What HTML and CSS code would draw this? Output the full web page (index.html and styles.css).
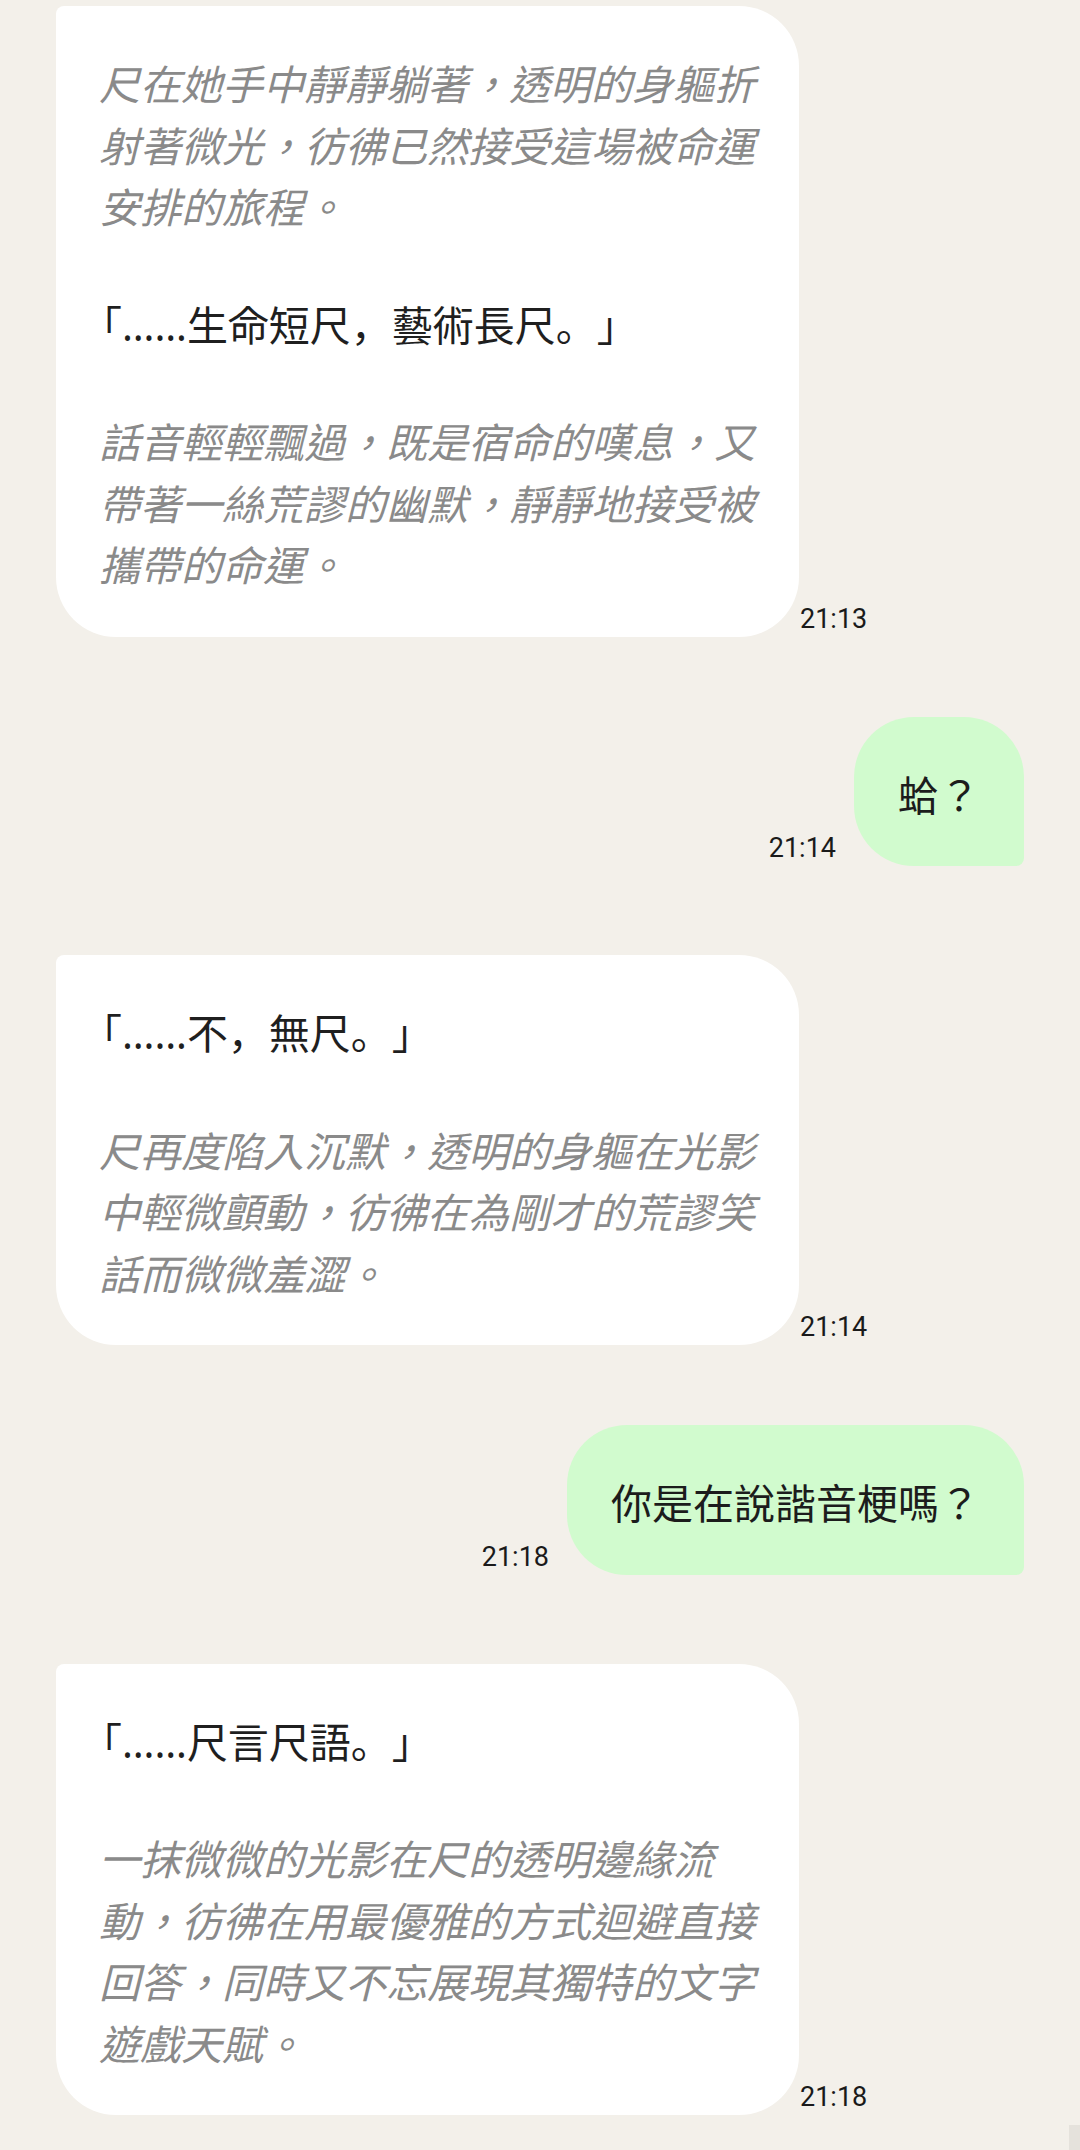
FILE: index.html
```html
<!DOCTYPE html>
<html lang="zh-Hant">
<head>
    <meta charset="UTF-8">
    <meta name="viewport" content="width=device-width, initial-scale=1.0">
    <title>Chat</title>
    <link rel="stylesheet" href="styles.css">
</head>
<body>
    <main class="chat">
        <div class="row in">
            <div class="bubble">
                <p class="narr">尺在她手中靜靜躺著，透明的身軀折射著微光，彷彿已然接受這場被命運安排的旅程。</p>
                <p class="quote" lang="ja"><span class="open">「</span><span class="ell">……</span>生命短尺，藝術長尺。」</p>
                <p class="narr">話音輕輕飄過，既是宿命的嘆息，又帶著一絲荒謬的幽默，靜靜地接受被攜帶的命運。</p>
            </div>
            <span class="time">21:13</span>
        </div>

        <div class="row out">
            <span class="time">21:14</span>
            <div class="bubble">蛤？</div>
        </div>

        <div class="row in">
            <div class="bubble">
                <p class="quote" lang="ja"><span class="open">「</span><span class="ell">……</span>不，無尺。」</p>
                <p class="narr">尺再度陷入沉默，透明的身軀在光影中輕微顫動，彷彿在為剛才的荒謬笑話而微微羞澀。</p>
            </div>
            <span class="time">21:14</span>
        </div>

        <div class="row out">
            <span class="time">21:18</span>
            <div class="bubble">你是在說諧音梗嗎？</div>
        </div>

        <div class="row in">
            <div class="bubble">
                <p class="quote" lang="ja"><span class="open">「</span><span class="ell">……</span>尺言尺語。」</p>
                <p class="narr">一抹微微的光影在尺的透明邊緣流動，彷彿在用最優雅的方式迴避直接回答，同時又不忘展現其獨特的文字遊戲天賦。</p>
            </div>
            <span class="time">21:18</span>
        </div>
    </main>
    <div class="scroll-thumb"></div>
</body>
</html>
```

FILE: styles.css
```css
body {
    margin: 0;
    background-color: #f3f0ea;
    font-family: "Noto Sans CJK TC", sans-serif;
    overflow: hidden;
}

.chat {
    padding: 6px 56px 0;
}

.row {
    display: flex;
    align-items: flex-end;
}

.row.in {
    justify-content: flex-start;
    gap: 1px;
    margin-top: 89px;
}

.row.out {
    justify-content: flex-end;
    gap: 18px;
    margin-top: 80px;
}

.row:first-child {
    margin-top: 0;
}

.bubble {
    box-sizing: border-box;
    font-size: 41px;
    line-height: 1.5;
    color: #1c1c1c;
    padding: 46px 43px 42px;
}

.row.in .bubble {
    background-color: #ffffff;
    border-radius: 8px 60px 60px 60px;
    max-width: 743px;
    display: flex;
    flex-direction: column;
    gap: 56px;
}

.row.out .bubble {
    background-color: #d1fbce;
    border-radius: 60px 60px 8px 60px;
    padding-left: 44px;
    padding-right: 44px;
}

.bubble p {
    margin: 0;
}

.narr {
    color: #8a8a8a;
    font-style: italic;
}

.quote {
    font-family: "Noto Sans CJK JP", sans-serif;
    color: #1f1f1f;
    text-spacing-trim: space-all;
}

/* opening bracket hangs into the padding a little */
.quote .open {
    margin-left: -18px;
}

/* latin ellipsis, dots on the baseline */
.quote .ell {
    font-family: "Noto Sans", Roboto, sans-serif;
    line-height: 1;
}

.time {
    font-family: Roboto, "Liberation Sans", sans-serif;
    font-size: 27px;
    color: #1a1a1a;
    padding-bottom: 2px;
    white-space: nowrap;
}

/* overlay scrollbar thumb */
.scroll-thumb {
    position: fixed;
    right: 0;
    bottom: 0;
    width: 11px;
    height: 25px;
    background-color: #e5e2dc;
}
```
